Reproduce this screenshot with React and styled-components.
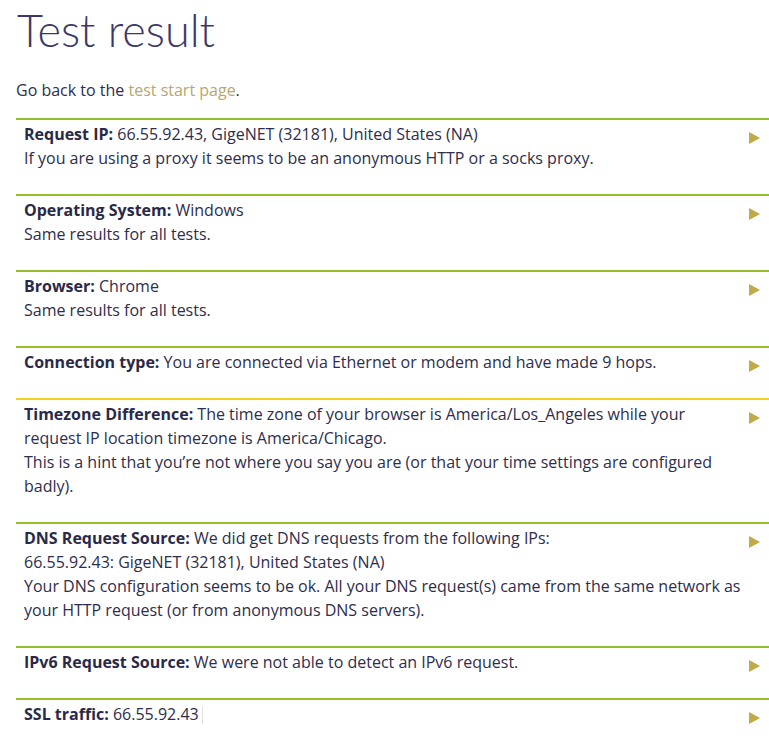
import React from 'react';
import styled, { createGlobalStyle } from 'styled-components';

const GlobalStyle = createGlobalStyle`
  body {
    margin: 0;
    background: #fff;
    font-family: "Open Sans", "Liberation Sans", sans-serif;
    color: #2e2d4d;
  }
`;

const Page = styled.div`
  padding: 0 0 0 16px;
`;

const Title = styled.h1`
  font-family: Lato, "Open Sans", sans-serif;
  font-weight: 300;
  font-size: 45px;
  line-height: 56px;
  color: #3b3868;
  margin: 0;
  padding-top: 2px;
  padding-left: 1px;
`;

const Intro = styled.p`
  font-size: 16px;
  line-height: 24px;
  margin: 20px 0 16px;

  a {
    color: #b8a66c;
    text-decoration: none;
  }
`;

const List = styled.div`
  display: flex;
  flex-direction: column;
`;

const Row = styled.div`
  display: flex;
  align-items: flex-start;
  border-top: 2px solid ${p => (p.$warn ? '#f0d31a' : '#96be2a')};
  padding: 2px 0 24px 8px;
  font-size: 16px;
  line-height: 24px;
`;

const Body = styled.div`
  flex: 1;
  padding-right: 6px;

  b {
    font-weight: 700;
    color: #2a2a48;
  }
`;

const Caret = styled.span`
  display: inline-block;
  width: 1px;
  height: 18px;
  margin-left: 3px;
  vertical-align: -4px;
  background: #e2e2e8;
`;

const Arrow = styled.span`
  flex: none;
  width: 0;
  height: 0;
  margin: 10px 9px 0 0;
  border-top: 6px solid transparent;
  border-bottom: 6px solid transparent;
  border-left: 11px solid #c0aa48;
`;

const rows = [
  {
    label: 'Request IP:',
    lines: [
      ' 66.55.92.43, GigeNET (32181), United States (NA)',
      'If you are using a proxy it seems to be an anonymous HTTP or a socks proxy.',
    ],
  },
  { label: 'Operating System:', lines: [' Windows', 'Same results for all tests.'] },
  { label: 'Browser:', lines: [' Chrome', 'Same results for all tests.'] },
  {
    label: 'Connection type:',
    lines: [' You are connected via Ethernet or modem and have made 9 hops.'],
  },
  {
    label: 'Timezone Difference:',
    warn: true,
    lines: [
      ' The time zone of your browser is America/Los_Angeles while your request IP location timezone is America/Chicago.',
      'This is a hint that you\u2019re not where you say you are (or that your time settings are configured badly).',
    ],
  },
  {
    label: 'DNS Request Source:',
    lines: [
      ' We did get DNS requests from the following IPs:',
      '66.55.92.43: GigeNET (32181), United States (NA)',
      'Your DNS configuration seems to be ok. All your DNS request(s) came from the same network as your HTTP request (or from anonymous DNS servers).',
    ],
  },
  { label: 'IPv6 Request Source:', lines: [' We were not able to detect an IPv6 request.'] },
  { label: 'SSL traffic:', lines: [' 66.55.92.43'], caret: true },
];

export default function App() {
  return (
    <Page>
      <GlobalStyle />
      <Title>Test result</Title>
      <Intro>
        Go back to the <a href="#">test start page</a>.
      </Intro>
      <List>
        {rows.map(r => (
          <Row key={r.label} $warn={r.warn}>
            <Body>
              <b>{r.label}</b>
              {r.lines[0]}
              {r.caret && <Caret />}
              {r.lines.slice(1).map(l => (
                <div key={l}>{l}</div>
              ))}
            </Body>
            <Arrow />
          </Row>
        ))}
      </List>
    </Page>
  );
}
